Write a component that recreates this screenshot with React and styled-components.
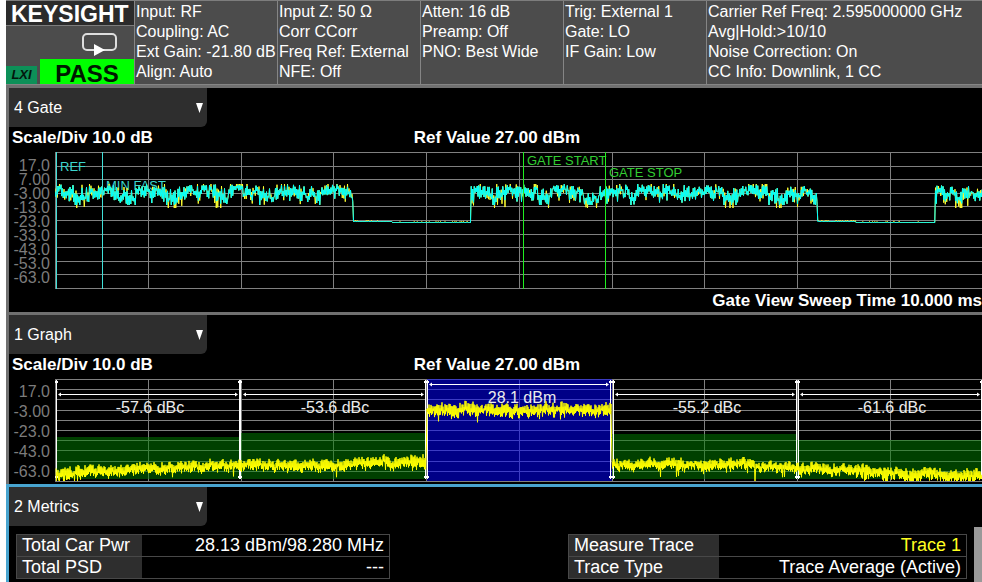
import styled, { createGlobalStyle, css } from "styled-components";

const PLOT_WIDTH = 927;

const GlobalStyle = createGlobalStyle`
  * {
    box-sizing: border-box;
  }

  body {
    margin: 0;
    background: #fff;
    color: #fff;
    font-family: "Liberation Sans", Arial, sans-serif;
    font-size: 16px;
  }
`;

const Screen = styled.main`
  display: flex;
  flex-direction: column;
  min-height: 100vh;
  margin-left: 6px;
  background: #000;
  overflow: hidden;
`;

const Header = styled.header`
  display: grid;
  grid-template-columns: 128px repeat(4, 143px) 1fr;
  height: 85px;
  border-top: 1px solid #7d7d7d;
  border-bottom: 1px solid #858585;
  background: #4c4c4c;
`;

const Status = styled.div`
  display: flex;
  flex-direction: column;
  justify-content: space-between;
`;

const Brand = styled.h1`
  height: 25px;
  margin: 0;
  padding-left: 5px;
  border-bottom: 1px solid #7d7d7d;
  background: #2b2b2b;
  font-size: 23px;
  line-height: 26px;
`;

const SweepIcon = styled.svg`
  align-self: flex-end;
  margin-top: 4px;
  margin-right: 17px;
`;

const Badges = styled.div`
  display: flex;
  align-items: flex-end;
  justify-content: space-between;
`;

const Lxi = styled.span`
  width: 31px;
  height: 18px;
  background: #0d9058;
  color: #03160c;
  font-size: 13px;
  font-style: italic;
  font-weight: bold;
  line-height: 18px;
  text-align: center;
`;

const Pass = styled.strong`
  width: 94px;
  height: 25px;
  background: #00ff00;
  color: #001800;
  font-size: 24px;
  line-height: 30px;
  text-align: center;
`;

const Info = styled.div`
  padding: 1px 0 0 1px;
  border-left: 1px solid #858585;
  line-height: 20px;
  white-space: nowrap;
`;

const Panel = styled.section`
  border-top: 3px solid;
  border-left: 3px solid;
  border-color: ${({ $active }) => ($active ? "#48a4cf" : "#707070")};

  ${({ $active }) =>
    $active &&
    css`
      display: flex;
      flex: 1;
      flex-direction: column;
    `}
`;

const Picker = styled.label`
  display: flex;
  align-items: center;
  position: relative;
  width: 198px;
  height: 39px;
  border-bottom-right-radius: 6px;
  background: #2e2e2e;

  svg {
    position: absolute;
    right: 3px;
    pointer-events: none;
  }
`;

const Select = styled.select`
  width: 100%;
  height: 100%;
  padding: 0 20px 0 5px;
  border: 0;
  background: transparent;
  color: #fff;
  font: inherit;
  appearance: none;
`;

const Scale = styled.div`
  display: grid;
  grid-template-columns: 1fr auto 1fr;
  height: 25px;
  padding-left: 3px;
  font-size: 17px;
  font-weight: bold;
  line-height: 22px;
`;

const SweepTime = styled.div`
  height: 23px;
  font-size: 17px;
  font-weight: bold;
  line-height: 23px;
  text-align: right;
  white-space: nowrap;
`;

const PlotRow = styled.div`
  display: grid;
  grid-template-columns: 46px 1fr;
`;

const Axis = styled.div`
  padding: ${({ $top }) => $top}px 5px 0 0;
  color: #7c7c7c;
  line-height: ${({ $step }) => $step}px;
  text-align: right;
`;

const Plot = styled.div`
  display: grid;
  position: relative;
  height: ${({ $height }) => $height}px;

  > svg {
    grid-area: 1 / 1;
    width: 100%;
    height: 100%;
  }

  > svg:last-child {
    z-index: 1;
  }
`;

const Marker = styled.span`
  position: absolute;
  top: ${({ $y }) => $y}px;
  left: ${({ $x }) => ($x / PLOT_WIDTH) * 100}%;
  color: ${({ $color = "#ececec" }) => $color};
  font-size: ${({ $size = 13 }) => $size}px;
  line-height: 16px;
  white-space: nowrap;
  ${({ $centered }) => $centered && "transform: translateX(-50%);"}
`;

const MetricsBody = styled.div`
  display: flex;
  flex: 1;
  gap: 7px;
  padding: 1px 0 0 7px;
`;

const Tables = styled.div`
  display: grid;
  flex: 1;
  grid-template-columns: 374fr 399fr;
  gap: 178px;
  align-items: start;
  padding-top: 7px;
`;

const Table = styled.table`
  width: 100%;
  border-collapse: collapse;
  font-size: 18px;

  th,
  td {
    height: 22px;
    padding: 0 5px 1px;
    border: 1px solid #484848;
    line-height: 20px;
    white-space: nowrap;
  }

  th {
    width: ${({ $label }) => $label}px;
    border-right: 0;
    background: #2e2e2e;
    font-weight: normal;
    text-align: left;
  }

  td {
    border-left: 0;
    text-align: right;
  }
`;

const TraceName = styled.td`
  color: #ffff20;
`;

const ScrollThumb = styled.div`
  width: 8px;
  background: #999;
`;

const header = [
  ["Input: RF", "Coupling: AC", "Ext Gain: -21.80 dB", "Align: Auto"],
  ["Input Z: 50 Ω", "Corr CCorr", "Freq Ref: External", "NFE: Off"],
  ["Atten: 16 dB", "Preamp: Off", "PNO: Best Wide"],
  ["Trig: External 1", "Gate: LO", "IF Gain: Low"],
  [
    "Carrier Ref Freq: 2.595000000 GHz",
    "Avg|Hold:>10/10",
    "Noise Correction: On",
    "CC Info: Downlink, 1 CC",
  ],
];

const views = ["1 Graph", "2 Metrics", "4 Gate"];

const gateTicks = ["17.0", "7.00", "-3.00", "-13.0", "-23.0", "-33.0", "-43.0", "-53.0", "-63.0"];
const graphTicks = ["17.0", "-3.00", "-23.0", "-43.0", "-63.0"];

const gateLines = [0, 14, 27, 41, 54, 68, 82, 95, 109, 122, 136];
const graphLines = [0, 10, 20, 31, 41, 51, 61, 71, 82, 92, 102];
const columns = [0, 93, 186, 278, 371, 464, 557, 649, 742, 835, 927];

const random = (seed) => {
  let s = seed;
  return () => {
    s = (s * 16807) % 2147483647;
    return s / 2147483647;
  };
};

// burst for 346px, then the transmitter is off for 118px, and again
const gateTraces = () => {
  const next = random(90210);
  const cyan = [];
  const yellow = [];
  let up = false;
  let drift = 0;
  for (let x = 0; x <= PLOT_WIDTH; x += 0.75) {
    const cycle = (x + 48) % 464;
    if (cycle > 346) {
      const y = cycle < 385 ? 69.5 : 70.5;
      cyan.push(`${x},${y}`);
      yellow.push(`${x},${y - (next() > 0.8 ? 1 : 0)}`);
      continue;
    }
    up = !up;
    drift = drift * 0.7 + (next() - 0.5) * 7;
    const low = Math.abs((x % 46.4) - 26) < 8;
    const centre = (low ? 45 : 40) + drift;
    const reach = (low ? 9 : 8) * next() * next() + 2;
    const y = Math.min(Math.max(centre + (up ? -reach : reach), 32 + next() * 3), 53);
    cyan.push(`${x},${y.toFixed(1)}`);
    // the yellow trace only shows where it leaves the cyan one
    const off = next() > 0.8 ? (up ? -3 : low ? 7 : 3) : 0;
    yellow.push(`${x},${Math.min(Math.max(y + off, 32), 56).toFixed(1)}`);
  }
  return [cyan.join(" "), yellow.join(" ")];
};

const floor = [
  [0, 95], [20, 94], [95, 90], [185, 86], [270, 86], [371, 83],
  [372, 31], [556, 31],
  [557, 86], [690, 86], [742, 89], [800, 91], [850, 95], [927, 97],
];

const floorAt = (x) => {
  const i = Math.max(1, floor.findIndex(([fx]) => fx >= x));
  const [x0, y0] = floor[i - 1];
  const [x1, y1] = floor[i];
  return y0 + ((y1 - y0) * (x - x0)) / (x1 - x0);
};

const graphTrace = () => {
  const next = random(4711);
  const points = [];
  let up = false;
  let drift = 0;
  for (let x = 1; x <= PLOT_WIDTH; x += 0.5) {
    up = !up;
    drift = drift * 0.8 + (next() - 0.5) * 2.5;
    const inCarrier = x > 371 && x < 557;
    const noisy = x < 30 || x > 790;
    const reach = 1 + next() * (inCarrier ? 6 : 5);
    let y = floorAt(x) + drift + (up ? -reach : reach);
    if (!up && next() > (noisy ? 0.75 : 0.96)) {
      y += 2 + next() * 6;
    }
    if (x === 700) {
      y = 102;
    }
    points.push(`${x},${Math.min(y, 102).toFixed(1)}`);
  }
  return points.join(" ");
};

const [cyanGate, yellowGate] = gateTraces();
const yellowGraph = graphTrace();

const bands = [
  { x: 1, width: 185, top: 58, label: "-57.6 dBc", at: 95 },
  { x: 186, width: 185, top: 54, label: "-53.6 dBc", at: 280 },
  { x: 557, width: 185, top: 55, label: "-55.2 dBc", at: 652 },
  { x: 742, width: 185, top: 61, label: "-61.6 dBc", at: 837 },
];

const edges = [1, 184, 185, 370, 372, 555, 558, 741, 743, 926];

const Grid = ({ lines }) => (
  <g stroke="#808080" shapeRendering="crispEdges">
    {lines.map((y) => (
      <line key={y} x1="0" x2={PLOT_WIDTH} y1={y + 0.5} y2={y + 0.5} />
    ))}
    {columns.map((x) => (
      <line key={x} x1={x + 0.5} x2={x + 0.5} y1="0" y2={lines[lines.length - 1]} />
    ))}
  </g>
);

const Span = ({ from, to, y }) => (
  <g stroke="#fff" fill="#fff">
    <line x1={from + 3} x2={to - 3} y1={y + 0.5} y2={y + 0.5} shapeRendering="crispEdges" />
    <path stroke="none" d={`M${from + 2} ${y + 0.5}l3-2v4zM${to - 2} ${y + 0.5}l-3-2v4z`} />
  </g>
);

const ViewPicker = ({ view }) => (
  <Picker>
    <Select aria-label="View" defaultValue={view}>
      {views.map((name) => (
        <option key={name}>{name}</option>
      ))}
    </Select>
    <svg width="9" height="10" viewBox="0 0 9 10">
      <path d="M1 0h7L4.500 10z" fill="#fff" />
    </svg>
  </Picker>
);

const ScaleRow = () => (
  <Scale>
    <span>Scale/Div 10.0 dB</span>
    <span>Ref Value 27.00 dBm</span>
  </Scale>
);

const AxisLabels = ({ ticks, step, top }) => (
  <Axis $step={step} $top={top}>
    {ticks.map((tick) => (
      <div key={tick}>{tick}</div>
    ))}
  </Axis>
);

const GatePlot = () => (
  <Plot $height={137}>
    <svg viewBox={`0 0 ${PLOT_WIDTH} 137`} preserveAspectRatio="none">
      <Grid lines={gateLines} />
    </svg>
    <Marker $x={5} $y={7} $color="#3cd6ce">REF</Marker>
    <Marker $x={51} $y={26} $color="#3cd6ce">MIN FAST</Marker>
    <Marker $x={472} $y={1} $color="#32cd32">GATE START</Marker>
    <Marker $x={554} $y={13} $color="#32cd32">GATE STOP</Marker>
    <svg viewBox={`0 0 ${PLOT_WIDTH} 137`} preserveAspectRatio="none">
      <g fill="none" strokeWidth="1">
        <polyline points={yellowGate} stroke="#ffff30" />
        <polyline points={cyanGate} stroke="#00ffff" />
      </g>
      <g shapeRendering="crispEdges">
        <rect x="1" y="0" width="1" height="137" fill="#40e0d8" />
        <rect x="47" y="0" width="1" height="137" fill="#40e0d8" />
        <rect x="468" y="0" width="1" height="137" fill="#20ee20" />
        <rect x="550" y="0" width="1" height="137" fill="#20ee20" />
      </g>
    </svg>
  </Plot>
);

const GraphPlot = () => (
  <Plot $height={105}>
    <svg viewBox={`0 0 ${PLOT_WIDTH} 105`} preserveAspectRatio="none">
      <Grid lines={graphLines} />
      {bands.map(({ x, width, top }) => (
        <rect key={x} x={x} y={top} width={width} height={100 - top} fill="#008000" opacity="0.5" />
      ))}
      <rect x="372" y="0" width="185" height="102" fill="#0000ff" opacity="0.53" />
    </svg>
    {bands.map(({ label, at }) => (
      <Marker key={label} $x={at} $y={21} $size={16} $centered>
        {label}
      </Marker>
    ))}
    <Marker $x={467} $y={11} $size={16} $centered>
      28.1 dBm
    </Marker>
    <svg viewBox={`0 0 ${PLOT_WIDTH} 105`} preserveAspectRatio="none">
      <g fill="#fff" shapeRendering="crispEdges">
        {edges.map((x) => (
          <path key={x} d={`M${x} 1h1v99h-1zM${x - 1} 2h3v2h-3zM${x - 1} 97h3v2h-3z`} />
        ))}
      </g>
      <Span from={1} to={185} y={15} />
      <Span from={186} to={371} y={15} />
      <Span from={372} to={556} y={5} />
      <Span from={558} to={742} y={15} />
      <Span from={743} to={927} y={15} />
      <polyline points={yellowGraph} fill="none" stroke="#ffff00" strokeWidth="1" />
    </svg>
  </Plot>
);

const App = () => {
  return (
    <Screen>
      <GlobalStyle />
      <Header>
        <Status>
          <Brand>KEYSIGHT</Brand>
          <SweepIcon width="36" height="25" viewBox="0 0 36 25">
            <rect x="2" y="2" width="33" height="16" rx="4" fill="none" stroke="#dedede" strokeWidth="2" />
            <path d="M13 12l11 6-11 6z" fill="#fff" />
          </SweepIcon>
          <Badges>
            <Lxi>LXI</Lxi>
            <Pass>PASS</Pass>
          </Badges>
        </Status>
        {header.map((lines) => (
          <Info key={lines[0]}>
            {lines.map((line) => (
              <div key={line}>{line}</div>
            ))}
          </Info>
        ))}
      </Header>

      <Panel>
        <ViewPicker view="4 Gate" />
        <ScaleRow />
        <PlotRow>
          <AxisLabels ticks={gateTicks} step={14} top={7} />
          <GatePlot />
        </PlotRow>
        <SweepTime>Gate View Sweep Time 10.000 ms</SweepTime>
      </Panel>

      <Panel>
        <ViewPicker view="1 Graph" />
        <ScaleRow />
        <PlotRow>
          <AxisLabels ticks={graphTicks} step={20} top={3} />
          <GraphPlot />
        </PlotRow>
      </Panel>

      <Panel $active>
        <ViewPicker view="2 Metrics" />
        <MetricsBody>
          <Tables>
            <Table $label={125}>
              <tbody>
                <tr>
                  <th scope="row">Total Car Pwr</th>
                  <td>28.13 dBm/98.280 MHz</td>
                </tr>
                <tr>
                  <th scope="row">Total PSD</th>
                  <td>---</td>
                </tr>
              </tbody>
            </Table>
            <Table $label={150}>
              <tbody>
                <tr>
                  <th scope="row">Measure Trace</th>
                  <TraceName>Trace 1</TraceName>
                </tr>
                <tr>
                  <th scope="row">Trace Type</th>
                  <td>Trace Average (Active)</td>
                </tr>
              </tbody>
            </Table>
          </Tables>
          <ScrollThumb />
        </MetricsBody>
      </Panel>
    </Screen>
  );
};

export default App;
